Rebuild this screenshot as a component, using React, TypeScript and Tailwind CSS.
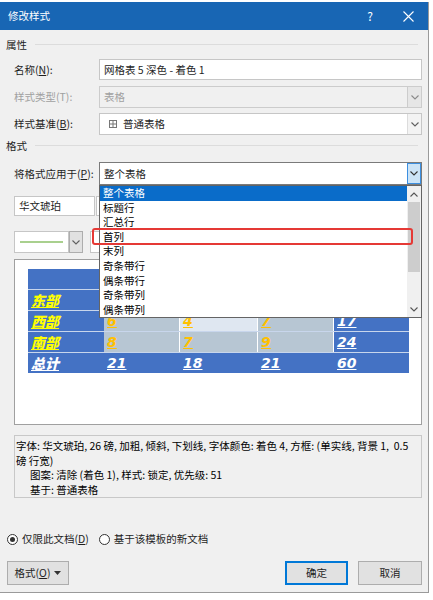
import React from "react";

const Chevron = ({ up = false, color = "#5f5f5f" }: { up?: boolean; color?: string }) => (
  <svg width="8" height="5" viewBox="0 0 8 5">
    <polyline
      points={up ? "0.5,4.5 4,1 7.5,4.5" : "0.5,0.5 4,4 7.5,0.5"}
      fill="none"
      stroke={color}
      strokeWidth="1.1"
    />
  </svg>
);

const SectionHeader = ({ title, className = "" }: { title: string; className?: string }) => (
  <div className={`flex items-center h-[15px] pl-[6px] pr-[10px] ${className}`}>
    <span>{title}</span>
    <div className="flex-1 ml-[8px] border-t border-[#dcdcdc]" />
  </div>
);

const listItems = ["整个表格", "标题行", "汇总行", "首列", "末列", "奇条带行", "偶条带行", "奇条带列", "偶条带列"];

type Cell = { text: string; kind: "head" | "first" | "gray" | "light" | "blue" };

// the 东部 row values sit under the open list, so only its label shows
const tableRows: Cell[][] = [
  [
    { text: "", kind: "head" },
    { text: "", kind: "head" },
    { text: "", kind: "head" },
    { text: "", kind: "head" },
    { text: "", kind: "head" },
  ],
  [
    { text: "东部", kind: "first" },
    { text: "", kind: "gray" },
    { text: "", kind: "light" },
    { text: "", kind: "gray" },
    { text: "", kind: "blue" },
  ],
  [
    { text: "西部", kind: "first" },
    { text: "6", kind: "gray" },
    { text: "4", kind: "light" },
    { text: "7", kind: "gray" },
    { text: "17", kind: "blue" },
  ],
  [
    { text: "南部", kind: "first" },
    { text: "8", kind: "gray" },
    { text: "7", kind: "gray" },
    { text: "9", kind: "gray" },
    { text: "24", kind: "blue" },
  ],
  [
    { text: "总计", kind: "first" },
    { text: "21", kind: "blue" },
    { text: "18", kind: "blue" },
    { text: "21", kind: "blue" },
    { text: "60", kind: "blue" },
  ],
];

const colWidths = ["w-[76px]", "w-[76px]", "w-[78px]", "w-[76px]", "w-[75px]"];

const PreviewTable = () => (
  <div className="flex flex-col w-[381px]">
    {tableRows.map((row, r) => (
      <div
        key={r}
        className={`flex ${r === 0 ? "h-[20px]" : "h-[21px] border-t border-[#c8d6ec]"}`}
      >
        {row.map((c, i) => {
          const total = r === 4;
          let cls = "bg-[#4472c4]";
          if (c.kind === "gray") cls = "bg-[#b7c6d3] border-r border-white";
          if (c.kind === "light") cls = "bg-[#dfe7f1] border-r border-white";
          return (
            <div
              key={i}
              className={`${colWidths[i]} h-full flex items-center pl-[3px] ${cls}`}
            >
              {c.kind === "first" ? (
                <span
                  className={`italic font-black underline text-[14px] leading-none ${
                    total ? "text-white" : "text-[#ffff00]"
                  }`}
                >
                  {c.text}
                </span>
              ) : c.text ? (
                <span
                  className={`italic font-black underline text-[14px] leading-none font-['DejaVu_Sans',sans-serif] ${
                    c.kind === "blue" || total ? "text-white" : "text-[#ffc000]"
                  }`}
                >
                  {c.text}
                </span>
              ) : null}
            </div>
          );
        })}
      </div>
    ))}
  </div>
);

const Radio = ({ checked }: { checked?: boolean }) => (
  <div className="w-[11px] h-[11px] rounded-full border border-[#333333] bg-white flex items-center justify-center">
    {checked && <div className="w-[5px] h-[5px] rounded-full bg-[#333333]" />}
  </div>
);

export default function App() {
  return (
    <div className="w-[433px] h-[600px] bg-white font-['Noto_Sans_CJK_SC',sans-serif] text-[10.5px] text-[#1e1e1e] overflow-hidden">
      <div className="mt-[2px] w-[429px] h-[591px] bg-[#f0f0f0] border-r border-b border-[#9a9a9a] flex flex-col">
        {/* title bar */}
        <div className="h-[28px] bg-[#1866b4] flex items-center text-white shrink-0">
          <span className="pl-[8px] text-[10.5px]">修改样式</span>
          <span className="ml-auto w-[30px] text-center text-[12px]">?</span>
          <span className="ml-[8px] mr-[5px] w-[30px] flex justify-center">
            <svg width="11" height="11" viewBox="0 0 11 11">
              <path d="M0.5 0.5 L10.5 10.5 M10.5 0.5 L0.5 10.5" stroke="white" strokeWidth="1.1" />
            </svg>
          </span>
        </div>

        <SectionHeader title="属性" className="mt-[7px]" />

        <div className="flex items-center pl-[14px] pr-[6px] h-[21px] mt-[7px]">
          <label className="w-[85px]">
            名称(<u>N</u>):
          </label>
          <div className="flex-1 h-full bg-white border border-[#c6c6c6] flex items-center pl-[4px]">
            网格表 5 深色 - 着色 1
          </div>
        </div>

        <div className="flex items-center pl-[14px] pr-[6px] h-[22px] mt-[6px]">
          <label className="w-[85px] text-[#a0a0a0]">样式类型(T):</label>
          <div className="flex-1 h-full bg-[#f0f0f0] border border-[#cccccc] flex items-center">
            <span className="pl-[4px] flex-1 text-[#a0a0a0]">表格</span>
            <div className="w-[14px] h-full border-l border-[#cccccc] bg-[#e6e6e6] flex items-center justify-center">
              <Chevron color="#8a8a8a" />
            </div>
          </div>
        </div>

        <div className="flex items-center pl-[14px] pr-[6px] h-[22px] mt-[5px]">
          <label className="w-[85px]">
            样式基准(<u>B</u>):
          </label>
          <div className="flex-1 h-full bg-white border border-[#c6c6c6] flex items-center">
            <span className="pl-[9px] pr-[6px] flex items-center">
              <svg width="8" height="8" viewBox="0 0 8 8">
                <rect x="0.5" y="0.5" width="7" height="7" fill="none" stroke="#777" />
                <path d="M4 0.5 V7.5 M0.5 4 H7.5" stroke="#777" />
              </svg>
            </span>
            <span className="flex-1">普通表格</span>
            <div className="w-[14px] h-full border-l border-[#dcdcdc] bg-[#f3f3f3] flex items-center justify-center">
              <Chevron />
            </div>
          </div>
        </div>

        <SectionHeader title="格式" className="mt-[3px]" />

        <div className="flex items-center pl-[14px] pr-[6px] h-[23px] mt-[9px] relative z-10">
          <label className="w-[85px]">
            将格式应用于(<u>P</u>):
          </label>
          <div className="flex-1 h-full relative">
            <div className="h-full bg-white border border-[#7a7a7a] flex items-center">
              <span className="pl-[4px] flex-1">整个表格</span>
              <div className="w-[14px] h-full border border-[#3c8fe0] bg-[#cce4f7] flex items-center justify-center">
                <Chevron color="#333333" />
              </div>
            </div>
            {/* open dropdown list */}
            <div className="absolute left-0 right-0 top-full h-[133px] bg-white border border-[#646464] flex overflow-hidden">
              <div className="flex-1 flex flex-col">
                {listItems.map((t, i) => (
                  <div
                    key={t}
                    className={`h-[14.6px] shrink-0 flex items-center pl-[3px] leading-none ${
                      i === 0 ? "bg-[#0a6cc9] text-white" : "text-black"
                    }`}
                  >
                    {t}
                  </div>
                ))}
              </div>
              <div className="w-[14px] bg-[#f0f0f0] flex flex-col items-center">
                <div className="h-[16px] flex items-center justify-center">
                  <Chevron up color="#555555" />
                </div>
                <div className="w-[12px] h-[70px] bg-[#cdcdcd]" />
                <div className="flex-1" />
                <div className="h-[16px] flex items-center justify-center">
                  <Chevron color="#555555" />
                </div>
              </div>
            </div>
            {/* red highlight around 首列 */}
            <div className="absolute left-[-7px] top-[66px] w-[321px] h-[17px] border-2 border-[#e53935] rounded-[3px]" />
          </div>
        </div>

        {/* font name box */}
        <div className="flex pl-[14px] mt-[11px] h-[20px]">
          <div className="w-[81px] h-full bg-white border border-[#c6c6c6] flex items-center pl-[4px]">
            华文琥珀
          </div>
          <div className="ml-[1px] w-[30px] h-full bg-white border border-[#c6c6c6]" />
        </div>

        {/* border style picker */}
        <div className="flex pl-[14px] mt-[15px] h-[22px]">
          <div className="w-[55px] h-full bg-white border border-[#c6c6c6] flex items-center justify-center">
            <div className="w-[43px] h-[2px] bg-[#a9d08e]" />
          </div>
          <div className="w-[14px] h-full bg-[#e1e1e1] border border-[#adadad] flex items-center justify-center">
            <Chevron />
          </div>
          <div className="ml-[7px] w-[30px] h-full bg-white border border-[#c6c6c6]" />
        </div>

        {/* preview */}
        <div className="ml-[14px] mr-[6px] mt-[6px] h-[166px] bg-white border border-[#a0a0a0] pl-[13px] pt-[9px]">
          <PreviewTable />
        </div>

        {/* description */}
        <div className="ml-[14px] mr-[6px] mt-[10px] h-[63px] border border-[#c8c8c8] pl-[1px] pt-[3px] leading-[14.5px] text-black">
          <div className="whitespace-nowrap">
            字体: 华文琥珀, 26 磅, 加粗, 倾斜, 下划线, 字体颜色: 着色 4, 方框: (单实线, 背景 1,&nbsp; 0.5
          </div>
          <div>磅 行宽)</div>
          <div className="pl-[14px]">图案: 清除 (着色 1), 样式: 锁定, 优先级: 51</div>
          <div className="pl-[14px]">基于: 普通表格</div>
        </div>

        {/* radios */}
        <div className="flex items-center pl-[7px] mt-[33px] h-[16px]">
          <Radio checked />
          <span className="ml-[4px]">
            仅限此文档(<u>D</u>)
          </span>
          <div className="ml-[10px]">
            <Radio />
          </div>
          <span className="ml-[4px]">基于该模板的新文档</span>
        </div>

        {/* buttons */}
        <div className="flex items-center pl-[7px] pr-[6px] mt-[14px] h-[24px]">
          <div className="w-[62px] h-full bg-[#e1e1e1] border border-[#adadad] flex items-center justify-center gap-[4px]">
            <span>
              格式(<u>O</u>)
            </span>
            <svg width="7" height="4" viewBox="0 0 7 4">
              <polygon points="0,0 7,0 3.5,4" fill="#333333" />
            </svg>
          </div>
          <div className="ml-auto w-[63px] h-full bg-[#e1e1e1] border-2 border-[#0078d7] flex items-center justify-center">
            确定
          </div>
          <div className="ml-[10px] w-[64px] h-full bg-[#e1e1e1] border border-[#adadad] flex items-center justify-center">
            取消
          </div>
        </div>
      </div>
    </div>
  );
}
